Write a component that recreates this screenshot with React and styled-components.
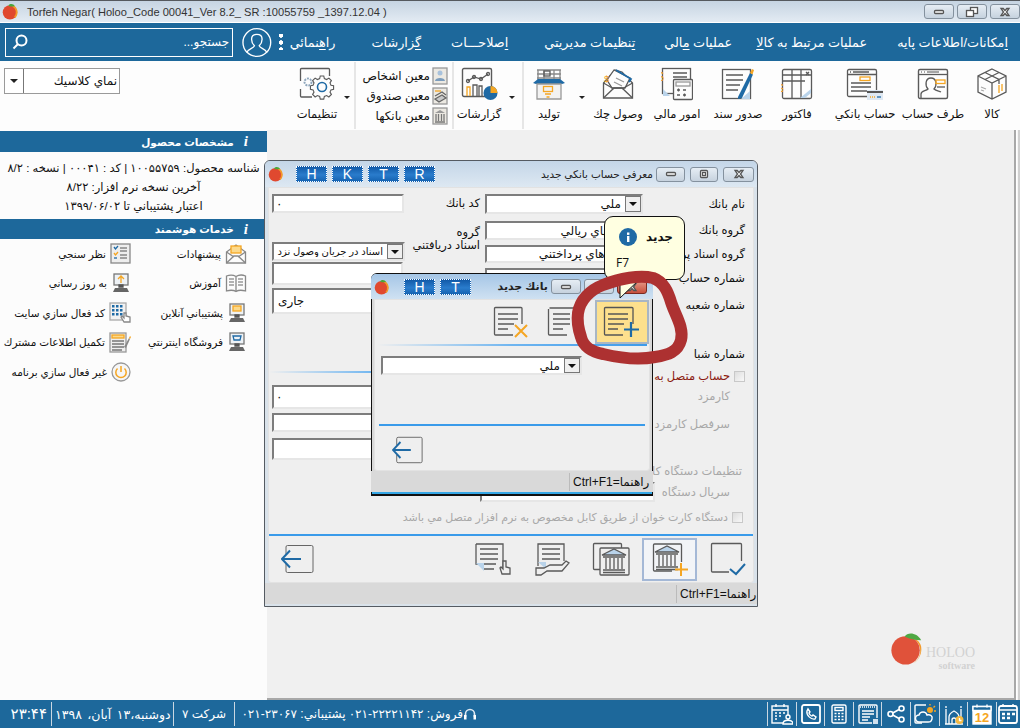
import React from 'react'
import styled, { createGlobalStyle } from 'styled-components'

const G = '#5a5a5a'
const O = '#f5a623'
const B = '#1f6aa5'
const L = '#b9d3ea'
const W = '#fff'

const GlobalStyle = createGlobalStyle`
  html, body { margin: 0; padding: 0; background: #f0f0f0; }
  * { box-sizing: border-box; }
  body { font-family: "Liberation Sans", "DejaVu Sans", sans-serif; font-size: 11px; color: #111; }
`

const Page = styled.div`
  width: 1020px;
  height: 728px;
  display: flex;
  flex-direction: column;
  overflow: hidden;
`

/* ---------- top of the app ---------- */
const TitleBar = styled.div`
  height: 23px;
  flex: none;
  display: flex;
  align-items: center;
  padding: 0 0 0 2px;
  border-top: 1px solid #55595e;
  border-bottom: 1px solid #fff;
  background: linear-gradient(#c6d4e2, #e3ebf3);
`
const AppTitle = styled.span`
  margin-left: 8px;
  font-size: 11.1px;
  color: #333;
  flex: 1;
`
const Controls = styled.div`
  display: flex;
  gap: ${(p) => p.$gap || 3}px;
`
const Ctl = styled.div`
  width: ${(p) => p.$w}px;
  height: 15px;
  display: flex;
  align-items: center;
  justify-content: center;
  border: 1px solid ${(p) => (p.$red ? '#7a2a20' : '#84919e')};
  border-radius: 3px;
  background: ${(p) => (p.$red ? 'linear-gradient(#e8a090, #c8503c)' : 'linear-gradient(#e6edf4, #c6d2de)')};
`
const MenuBar = styled.div`
  height: 38px;
  flex: none;
  display: flex;
  direction: rtl;
  align-items: center;
  padding: 0 12px 0 5px;
  color: #fff;
  background: #1d689b;
  font-size: 12.8px;
`
const MenuItem = styled.span`
  margin-left: ${(p) => p.$gap}px;
  white-space: nowrap;
  u { text-underline-offset: 2px; }
`
const Dots = styled.span`
  width: 4px;
  height: 16px;
  margin: 0 7px 0 7px;
  background: radial-gradient(circle, #fff 2px, transparent 2.4px) 0 -2px / 4px 7px repeat-y;
`
const SearchBox = styled.div`
  width: 238px;
  height: 29px;
  margin-right: 9px;
  display: flex;
  align-items: center;
  justify-content: space-between;
  padding: 0 3px 0 6px;
  border: 1px solid #fff;
  font-size: 12px;
`

const Toolbar = styled.div`
  height: 69px;
  flex: none;
  display: flex;
  direction: rtl;
  background: #fdfdfd;
  padding-top: 1px;
`
const Tool = styled.div`
  width: ${(p) => p.$w}px;
  flex: none;
  display: flex;
  flex-direction: column;
  align-items: center;
  white-space: nowrap;
  font-size: 11.5px;
  svg { height: 34px; margin-top: 5px; flex: none; }
  span { margin-top: 6px; }
`
const ToolArrow = styled.div`
  width: ${(p) => p.$w}px;
  flex: none;
  padding-top: 34px;
  display: flex;
  justify-content: center;
  &::after {
    content: '';
    border: 3px solid transparent;
    border-top: 3px solid #222;
    border-bottom: 0;
  }
`
const ToolSep = styled.div`
  width: 2px;
  flex: none;
  margin: 0 ${(p) => p.$m || 0}px 1px;
  background: #e6e6e6;
`
const Ledgers = styled.div`
  width: 96px;
  flex: none;
  display: flex;
  flex-direction: column;
  padding: 4px 4px 0 0;
`
const LedgerRow = styled.div`
  height: 20px;
  display: flex;
  align-items: center;
  gap: 2px;
  white-space: nowrap;
  font-size: 12px;
`
const ViewCombo = styled.div`
  width: 116px;
  height: 26px;
  margin: 6px auto 0 4px;
  display: flex;
  direction: ltr;
  border: 1px solid #9a9a9a;
  background: #fff;
  font-size: 12px;
`
const ComboArrow = styled.div`
  width: 19px;
  display: flex;
  align-items: center;
  justify-content: center;
  border-right: 1px solid #777;
  &::after {
    content: '';
    border: 4px solid transparent;
    border-top: 4px solid #222;
    border-bottom: 0;
  }
`
const ComboText = styled.div`
  flex: 1;
  direction: rtl;
  padding-right: 2px;
  line-height: 24px;
`

/* ---------- body ---------- */
const Body = styled.div`
  position: relative;
  flex: 1;
  display: flex;
  min-height: 0;
`
const Sidebar = styled.div`
  width: 267px;
  flex: none;
  direction: rtl;
  padding-top: 1px;
  background: #fcfcfc;
`
const SideHead = styled.div`
  height: ${(p) => p.$h || 21}px;
  display: flex;
  align-items: center;
  gap: 10px;
  padding-right: 19px;
  color: #fff;
  background: #1d689b;
  font-size: 10.5px;
  font-weight: bold;
  i { font-family: "Liberation Serif", serif; font-size: 15px; }
`
const SideInfo = styled.div`
  padding: 7px 0 3px;
  text-align: center;
  line-height: 19px;
  font-size: 11.5px;
  white-space: nowrap;
`
const SideGrid = styled.div`
  display: grid;
  grid-template-columns: 135px 132px;
  direction: ltr;
`
const SideItem = styled.div`
  height: 29.5px;
  display: flex;
  direction: rtl;
  align-items: center;
  gap: 4px;
  padding-right: ${(p) => p.$pr}px;
  white-space: nowrap;
  font-size: 10.5px;
`
const Desktop = styled.div`
  flex: 1;
  position: relative;
  margin-right: 4px;
  border-right: 2px solid #a8a8a8;
  border-bottom: 2px solid #a8a8a8;
  background: #f0f0f0;
`
const EdgeStrip = styled.div`
  position: absolute;
  top: 0;
  right: 0;
  bottom: 0;
  width: 4px;
  border-left: 1px solid #fff;
  border-right: 2px solid #d0d0d0;
  background: #f6f6f6;
`
const Brand = styled.div`
  position: absolute;
  right: 39px;
  bottom: 27px;
  display: flex;
  align-items: flex-start;
`
const BrandText = styled.div`
  margin: 13px 0 0 3px;
  font-family: "Liberation Serif", serif;
  color: #d2d2d2;
  text-align: right;
  font-size: 14px;
  line-height: 15px;
  small { display: block; font-size: 10px; line-height: 10px; margin-top: 1px; font-weight: bold; }
`

/* ---------- windows ---------- */
const Win = styled.div`
  position: absolute;
  left: ${(p) => p.$x}px;
  top: ${(p) => p.$y}px;
  width: ${(p) => p.$w}px;
  height: ${(p) => p.$h}px;
  display: flex;
  flex-direction: column;
  padding: 0 ${(p) => (p.$active ? 2 : 3)}px 2px;
  border: ${(p) => (p.$active ? '1.5px solid #111' : '1.5px solid #555b62')};
  border-radius: 6px 6px 0 0;
  background: ${(p) => (p.$active ? '#d8d8d8' : '#d9e2ea')};
  ${(p) => p.$active && 'border-bottom: 2px solid #111; box-shadow: inset 0 -2px 0 #35a7e6;'}
`
const WinTitle = styled.div`
  height: ${(p) => p.$h}px;
  flex: none;
  margin: 0 -3px;
  padding: 0 ${(p) => p.$pr}px 0 3px;
  display: flex;
  align-items: center;
  border-radius: 5px 5px 0 0;
  background: ${(p) => (p.$active ? 'linear-gradient(#a5c6e6, #cfe1f2)' : 'linear-gradient(#c4d6e8, #dde8f2)')};
`
const WinName = styled.div`
  margin-left: auto;
  margin-right: 3px;
  direction: rtl;
  font-size: ${(p) => p.$size || 11}px;
  font-weight: ${(p) => p.$weight || 'bold'};
  white-space: nowrap;
  color: #222;
`
const Letters = styled.div`
  display: flex;
  gap: 5px;
  margin-left: ${(p) => p.$ml || 12}px;
`
const Letter = styled.div`
  width: 31px;
  height: 16px;
  display: flex;
  align-items: center;
  justify-content: center;
  outline: 1px dotted #fff;
  outline-offset: -1px;
  color: #fff;
  font-size: 14px;
  background: linear-gradient(#0f56a4, #2a7ccc 55%, #1360ae);
`
const Panel = styled.div`
  flex: 1;
  min-height: 0;
  display: flex;
  flex-direction: column;
  background: #efefef;
  border: 1px solid #e2e2e2;
  border-radius: 0 0 3px 3px;
`
const WinStatus = styled.div`
  height: 21px;
  flex: none;
  margin: 0 -3px;
  display: flex;
  justify-content: flex-end;
  align-items: center;
  background: #d9d9d9;
  font-size: 12px;
`
const StatusCell = styled.div`
  width: ${(p) => p.$w}px;
  padding-left: 3px;
  line-height: 18px;
  border-left: 1px solid #bbb;
  white-space: nowrap;
`

const Form = styled.div`
  flex: 1;
  min-height: 0;
  display: flex;
  direction: ltr;
  padding: 6px 8px 0 3px;
`
const Col = styled.div`
  width: ${(p) => p.$w}px;
  flex: none;
  margin-left: ${(p) => p.$ml || 0}px;
  display: flex;
  flex-direction: column;
  direction: rtl;
`
const Row = styled.div`
  height: ${(p) => p.$h}px;
  flex: none;
  margin-top: ${(p) => p.$t || 0}px;
  display: flex;
  align-items: ${(p) => p.$align || 'center'};
  justify-content: ${(p) => p.$justify || 'space-between'};
  white-space: nowrap;
  font-size: 11.5px;
  color: ${(p) => p.$color || '#111'};
`
const FieldLabel = styled.div`
  width: ${(p) => (p.$w ? `${p.$w}px` : 'auto')};
  flex: none;
  padding-right: ${(p) => p.$pr || 0}px;
  line-height: 13px;
`
const Field = styled.div`
  width: ${(p) => p.$w}px;
  height: ${(p) => (p.$height ? `${p.$height}px` : '100%')};
  flex: none;
  margin: ${(p) => p.$m || 0};
  display: flex;
  align-items: center;
  padding: 0 ${(p) => p.$pad ?? 4}px;
  overflow: hidden;
  border: 2px solid;
  border-color: #7d7d7d #e6e6e6 #e6e6e6 #7d7d7d;
  background: #fff;
  font-size: 12px;
  direction: ${(p) => (p.$ltr ? 'ltr' : 'rtl')};
`
const FieldValue = styled.span`
  flex: 1;
  direction: rtl;
  text-align: right;
  white-space: nowrap;
  overflow: hidden;
  font-size: ${(p) => p.$size || 12}px;
`
const DropBtn = styled.div`
  width: 16px;
  height: 100%;
  flex: none;
  margin-left: 4px;
  display: flex;
  align-items: center;
  justify-content: center;
  border: 1px solid #777;
  background: #efefef;
  &::after {
    content: '';
    border: 4px solid transparent;
    border-top: 4px solid #111;
    border-bottom: 0;
  }
`
const FadeRule = styled.div`
  height: 2px;
  flex: none;
  margin: ${(p) => p.$m || '0'};
  background: linear-gradient(to right, #efefef, #6fb5f0 50%, #3c9bea);
`
const BlueRule = styled.div`
  height: 2px;
  flex: none;
  margin: ${(p) => p.$m || '0'};
  background: #3a9bea;
`
const CheckBox = styled.span`
  width: 11px;
  height: 11px;
  flex: none;
  display: inline-block;
  border: 1px solid #c8c8c8;
  background: linear-gradient(135deg, #ddd, #f8f8f8);
`
const CheckLine = styled.div`
  display: flex;
  align-items: center;
  gap: 4px;
  direction: rtl;
  margin: ${(p) => p.$m || 0};
  padding-right: ${(p) => p.$pr || 0}px;
  height: 14px;
  white-space: nowrap;
  font-size: ${(p) => p.$size || 11.5}px;
  color: ${(p) => p.$color};
`
const SmallKey = styled.div`
  width: 30px;
  height: 20px;
  margin: 0 17px 0 0;
  background: #b5b5b5;
  border-radius: 0 0 2px 2px;
`
const Actions = styled.div`
  height: 46px;
  flex: none;
  display: flex;
  align-items: center;
  direction: ltr;
  padding: 0 8px 0 12px;
`
const ActionBtn = styled.div`
  width: ${(p) => p.$w}px;
  height: ${(p) => p.$h || 43}px;
  flex: none;
  margin: ${(p) => p.$m || 0};
  display: flex;
  align-items: center;
  justify-content: center;
  border: ${(p) => (p.$on ? '2px solid #a4b8d6' : '0')};
  background: ${(p) => (p.$on ? '#f2f4f7' : 'transparent')};
`
const BankToolbar = styled.div`
  height: 44px;
  flex: none;
  display: flex;
  align-items: center;
  direction: ltr;
  padding: 0 0 0 118px;
`
const ToolGap = styled.span`
  width: ${(p) => p.$w}px;
  flex: none;
`
const NewDocBtn = styled.div`
  width: 54px;
  height: 44px;
  margin-left: 12px;
  display: flex;
  align-items: center;
  justify-content: center;
  border: 2px solid #a9b6c4;
  background: #fde08d;
`
const BankSelect = styled.div`
  margin: 10px 0 0 6px;
  height: 19px;
  flex: none;
`
const Tip = styled.div`
  position: absolute;
  left: 604px;
  top: 86px;
  width: 81px;
  height: 64px;
  padding: 11px 11px 0 11px;
  border: 1px solid #111;
  border-radius: 9px;
  background: #ffffe1;
  font-size: 12px;
`
const TipHead = styled.div`
  display: flex;
  align-items: center;
  justify-content: space-between;
  padding-left: 3px;
  font-weight: bold;
  direction: ltr;
`
const TipKey = styled.div`
  margin-top: 8px;
  font-family: "Open Sans", sans-serif;
`
const Overlay = styled.svg`
  position: absolute;
  left: ${(p) => p.$x}px;
  top: ${(p) => p.$y}px;
  overflow: visible;
  pointer-events: none;
`

/* ---------- bottom bar ---------- */
const BottomBar = styled.div`
  height: 28px;
  flex: none;
  display: flex;
  align-items: center;
  padding-left: 11px;
  color: #fff;
  background: #1d689b;
`
const BottomText = styled.span`
  direction: rtl;
  width: ${(p) => p.$w}px;
  flex: none;
  text-align: ${(p) => p.$align || 'center'};
  white-space: nowrap;
  font-size: ${(p) => p.$size || 12}px;
  word-spacing: ${(p) => p.$ws || 0}px;
`
const Phone = styled.bdi`
  direction: ltr;
  unicode-bidi: isolate;
`
const BarSep = styled.div`
  width: 1px;
  height: 24px;
  flex: none;
  margin: 0 ${(p) => p.$r ?? 0}px 0 ${(p) => p.$l ?? 0}px;
  background: #c9d7e2;
`
const TrayIcons = styled.div`
  display: flex;
  align-items: center;
  margin-left: auto;
  overflow: hidden;
  width: 253px;
`
const TrayCell = styled.div`
  width: ${(p) => p.$w}px;
  flex: none;
  display: flex;
  justify-content: center;
`

/* ---------- drawings ---------- */
const Svg = ({ w, h = w, stroke = G, sw = 1.3, children }) => (
  <svg width={w} height={h} viewBox={`0 0 ${w} ${h}`} fill="none" stroke={stroke} strokeWidth={sw}>
    {children}
  </svg>
)

const Tomato = ({ s = 16 }) => (
  <svg width={s} height={s} viewBox="0 0 16 16">
    <circle cx="7.5" cy="8.8" r="6.8" fill="#e0492f" />
    <path d="M10 2.5a7 7 0 0 1 2 11" stroke="#f39a2a" strokeWidth="1.6" fill="none" />
    <path d="M6 2.5C8 0 11 1 12 3 9.5 3.5 8 3.5 6 2.5Z" fill="#4aa63a" />
  </svg>
)
const MinIcon = () => (
  <Svg w={12} h={8} stroke="#555"><rect x="1.5" y="2.5" width="9" height="3" rx="1" fill="#fff" /></Svg>
)
const MaxIcon = () => (
  <Svg w={12} h={10} stroke="#555"><rect x="2.5" y="1.5" width="7" height="7" rx="1" fill="#fff" /><rect x="4.5" y="3.5" width="3" height="3" /></Svg>
)
const RestoreIcon = () => (
  <Svg w={14} h={12} stroke="#555"><rect x="5.5" y="1.5" width="7" height="6" fill="#fff" /><rect x="1.5" y="4.5" width="7" height="6" fill="#fff" /></Svg>
)
const CloseIcon = () => (
  <Svg w={14} h={10} stroke="#555"><path d="M3 1.5h2.2L7 3.5l1.8-2H11L8.5 5 11 8.5H8.8L7 6.5l-1.8 2H3L5.5 5Z" fill="#fff" /></Svg>
)

const BoxIcon = () => (
  <Svg w={32} h={34}>
    <path d="M16 2 30 9V25L16 32 2 25V9Z M2 9 16 16 30 9 M16 16V32 M9 5.5 23 12.5V17 M23 5.5 9 12.5" />
    <path d="M23 18v8M26 17v7" stroke={O} />
    <path d="M5 20l5 2M5 23l3 1" stroke="#aaa" />
  </Svg>
)
const ContactIcon = () => (
  <Svg w={32} h={34}>
    <rect x="1.5" y="2.5" width="29" height="29" rx="1.5" strokeWidth="1.4" />
    <path d="M2 7.5h28" />
    <path d="M4 5h1M7 5h1M10 5h12" stroke="#888" />
    <path d="M4 31v-4c0-3 5-3 7-5-3-3-3-11 3-11s6 8 3 11c2 2 5 2 7 3" />
    <rect x="19" y="13" width="9" height="3.5" stroke={O} />
    <path d="M20 20h8" />
  </Svg>
)
const BankAccIcon = () => (
  <Svg w={38} h={34}>
    <rect x="1.5" y="2.5" width="29" height="27" rx="1.5" />
    <path d="M2 7.5h28M4 5h1M7 5h16" />
    <rect x="14" y="10" width="10" height="3.5" stroke={O} />
    <path d="M5 16h20M5 20h20M5 24h16" />
    <rect x="21" y="23" width="16" height="10" fill="#dfe9f3" stroke="none" />
    <rect x="21" y="24" width="16" height="2" fill="#555" stroke="none" />
    <path d="M24 30h5" stroke={O} strokeDasharray="1 1" /><path d="M31 30h4" stroke={B} />
  </Svg>
)
const InvoiceIcon = () => (
  <Svg w={32} h={34}>
    <rect x="1.5" y="2.5" width="29" height="29" rx="1.5" />
    <path d="M2 8h28M2 14h22M11 3v28M20 3v28" />
    <path d="M25 5l3 3m0-3l-3 3" />
    <path d="M30 22v4l-6 5h-5Z" fill={L} stroke="none" />
    <text x="2.5" y="25" fontSize="11" fill={O} stroke="none">$</text>
  </Svg>
)
const VoucherIcon = () => (
  <Svg w={34} h={34}>
    <rect x="1.5" y="2.5" width="28" height="29" />
    <path d="M5 8h17M5 13h17M5 18h14M5 23h12" strokeWidth="1.5" />
    <path d="M17 30 29 6l3 1.5L21 31l-4 1Z" fill={B} stroke="none" />
    <path d="M29 6l2-4 2 1-1.5 4.5Z" fill={O} stroke="none" />
    <path d="M20 32h9v-8Z" fill={L} stroke="none" />
  </Svg>
)
const FinanceIcon = () => (
  <Svg w={32} h={34}>
    <rect x="1.5" y="1.5" width="28" height="25" />
    <path d="M12 6h14M12 10h14" />
    <text x="3" y="14" fontSize="13" fill={O} stroke="none">$</text>
    <path d="M2 22v7h7Z" fill={L} stroke="none" />
    <rect x="12.5" y="12.5" width="19" height="20" rx="1" fill="#fdfdfd" />
    <rect x="15" y="15" width="14" height="4" stroke="#999" />
    <path d="M16 23h3M22 23h3M16 28h3M22 28h3M17.5 21.5v3M23.5 26.5v3" />
  </Svg>
)
const EnvelopeCheckIcon = () => (
  <Svg w={32} h={34}>
    <path d="M1.5 16v15h29V16L20 5 13 3Z" />
    <path d="M5 13 12 3l16 8-5 10H10Z" fill="#fdfdfd" />
    <path d="M14 3l15 9-2 3" stroke={B} strokeWidth="1.8" />
    <text x="7" y="15" fontSize="9" fill={O} stroke="none">$</text>
    <path d="M14 11l8 4M12 15l8 4" stroke="#999" />
    <path d="M1.5 31 12 21h8L30.5 31M1.5 16 12 22M30.5 16 20 22" />
  </Svg>
)
const ProductionIcon = () => (
  <Svg w={34} h={34}>
    <path d="M5 3h24M5 7h24M5 11h24M6 3v10M12 3v10M22 3v10M28 3v10" stroke="#888" />
    <rect x="12" y="4" width="6" height="5" />
    <path d="M1 16 6 12h22l5 4-3 1H4Z" fill={B} stroke="none" />
    <path d="M5 17h24v15H5Z" fill="#f2f2f2" stroke="#999" />
    <rect x="11.5" y="19.5" width="9" height="5" stroke={O} />
    <path d="M13 27h6M14.5 30h3" stroke={O} strokeWidth="1.6" />
  </Svg>
)
const ReportIcon = () => (
  <Svg w={37} h={34}>
    <rect x="1.5" y="1.5" width="29" height="28" rx="1.5" strokeWidth="1.4" />
    <path d="M7 14l6-4 7 2 7-5" />
    <circle cx="7" cy="14" r="1.5" /><circle cx="13" cy="10" r="1.5" /><circle cx="20" cy="12" r="1.5" /><circle cx="27" cy="7" r="1.5" />
    <path d="M6 29V20h3v9" stroke={O} /><path d="M12 29V18h4v11M18 29V19h3v10" />
    <circle cx="29.5" cy="26" r="7" fill={B} stroke="none" />
    <path d="M29.5 26v-7a7 7 0 0 1 7 7Z" fill={O} stroke="none" />
  </Svg>
)
const GearIcon = () => (
  <Svg w={36} h={34}>
    <path d="M1.5 14V2.5a1 1 0 0 1 1-1h27a1 1 0 0 1 1 1V9M1.5 22v7a1 1 0 0 0 1 1H13" />
    <circle cx="23" cy="20" r="4.5" stroke={B} strokeWidth="1.6" />
    <path d="M21 8h4l.7 3 2.6 1.1 2.6-1.6 2.9 2.9-1.6 2.6 1.1 2.6 3 .7v4l-3 .7-1.1 2.6 1.6 2.6-2.9 2.9-2.6-1.6-2.6 1.1-.7 3h-4l-.7-3-2.6-1.1-2.6 1.6-2.9-2.9 1.6-2.6-1.1-2.6-3-.7v-4l3-.7 1.1-2.6-1.6-2.6 2.9-2.9 2.6 1.6 2.6-1.1Z" transform="translate(3 2) scale(.87)" />
    <circle cx="9" cy="15" r="3.5" stroke="#8fa7bd" strokeDasharray="2 1" strokeWidth="2" />
  </Svg>
)
const TOOL_ICONS = { BoxIcon, ContactIcon, BankAccIcon, InvoiceIcon, VoucherIcon, FinanceIcon, EnvelopeCheckIcon, ProductionIcon, ReportIcon }

const PersonLedger = () => (
  <Svg w={16} h={18} stroke="#999">
    <rect x="1" y="1" width="14" height="16" fill="#ece9e2" />
    <circle cx="8" cy="6" r="2.5" fill="#a8c2dc" stroke="none" />
    <path d="M3 14c0-4 10-4 10 0Z" fill="#7b9cbc" stroke="none" />
  </Svg>
)
const CashLedger = () => (
  <Svg w={16} h={18} stroke="#999">
    <rect x="1" y="1" width="14" height="16" fill="#ece9e2" />
    <path d="M3 4h6" stroke={O} />
    <path d="M3 12l7-4 4 3-7 4Z" fill="#c9c9c9" stroke="#666" />
    <path d="M3 9l7-4 4 3" stroke="#666" />
  </Svg>
)
const BankLedger = () => (
  <Svg w={16} h={18} stroke="#999">
    <rect x="1" y="1" width="14" height="16" fill="#ece9e2" />
    <path d="M3 6l5-3 5 3Z" fill="#999" stroke="none" />
    <path d="M4 7v7M6.5 7v7M9.5 7v7M12 7v7M3 15h10" stroke="#777" />
  </Svg>
)

const MailIdea = () => (
  <Svg w={22} h={22} stroke="#888">
    <path d="M1.5 9v11h19V9L11 2Z" />
    <rect x="6" y="3" width="10" height="7" fill="#fcd98a" stroke={O} />
    <path d="M1.5 20 9 13h4l7.5 7M1.5 9 9 14M20.5 9 13 14" />
  </Svg>
)
const ChecklistIcon = () => (
  <Svg w={21} h={21} stroke="#888">
    <rect x="1" y="1" width="19" height="19" fill="#eee" />
    <path d="M4 4l1.5 2L8 3" stroke={B} />
    <path d="M4 10l1.5 2L8 9" stroke={O} />
    <path d="M4 15h3" stroke={B} />
    <path d="M10 5h7M10 8h7M10 12h7M10 15h7" />
  </Svg>
)
const BookIcon = () => (
  <Svg w={22} h={21} stroke="#888">
    <path d="M1.5 3c4-1.5 7-1 9.5.5C13.5 2 17 1.5 20.5 3v15c-3.5-1-7-1-9.5.5C8.5 17 5 17 1.5 18ZM11 3.5v15" />
    <path d="M4 6h5M4 9h5M4 12h5M13 6h5M13 9h5M13 12h5" stroke="#999" />
  </Svg>
)
const Monitor = ({ children }) => (
  <Svg w={20} h={20} stroke="#555">
    <rect x="3" y="1" width="14" height="11" fill="#eef2f6" stroke="#777" />
    <path d="M8 12h4v2H8Z" fill="#555" />
    <path d="M2 19l2-4h12l2 4Z" fill="#666" stroke="none" />
    {children}
  </Svg>
)
const KeypadIcon = () => (
  <Svg w={22} h={21} stroke="#aaa">
    <rect x="1" y="1" width="16" height="17" fill="#f2f2f2" />
    {[3, 7, 11].flatMap((x) => [3, 7, 11].map((y) => <rect key={`${x}${y}`} x={x} y={y} width="2.5" height="2.5" fill={B} stroke="none" />))}
    <path d="M15 20l-3-5 1-1 2 2v-5h2v3l4 1v5Z" fill="#fff" stroke="#888" />
  </Svg>
)
const FormPenIcon = () => (
  <Svg w={22} h={21} stroke="#999">
    <rect x="1" y="1" width="16" height="19" fill="#eee" />
    <rect x="3" y="3" width="12" height="3" fill="#fcd98a" stroke={O} />
    <path d="M3 9h12M3 12h12M3 15h12M3 18h10" stroke="#777" />
    <path d="M15 15 20 6l1 1-4 9Z" fill="#888" stroke="none" />
    <path d="M20 6l1-2 1 1-1 2Z" fill={O} stroke="none" />
  </Svg>
)
const PowerIcon = () => (
  <Svg w={20} h={20} stroke="#999">
    <circle cx="10" cy="10" r="9" fill="#f6f6f6" />
    <path d="M6.5 6.5a5.2 5.2 0 1 0 7 0M10 4v6" stroke={O} strokeWidth="1.5" />
  </Svg>
)

const BlueArrow = () => (
  <svg width="34" height="30" viewBox="0 0 34 30" fill="none">
    <path d="M6.5 1.5h24a1.5 1.5 0 0 1 1.5 1.5v24a1.5 1.5 0 0 1-1.5 1.5h-24a1.5 1.5 0 0 1-1.5-1.5v-7M5 10V3a1.5 1.5 0 0 1 1.5-1.5" stroke="#666" strokeWidth="1" />
    <path d="M1 15h19M9 6.5 1 15l8 8.5" stroke="#1f6aa5" strokeWidth="2" />
  </svg>
)
const DocLines = () => (
  <Svg w={36} h={32}>
    <path d="M2.5 2h25a1 1 0 0 1 1 1v17M1.5 3v25a1 1 0 0 0 1 1H20" />
    <path d="M6 8h17M6 13h17M6 18h17M6 23h10" strokeWidth="1.4" />
  </Svg>
)
const OkBox = () => (
  <Svg w={38} h={34}>
    <path d="M20 30H3.5a1 1 0 0 1-1-1V2.5a1 1 0 0 1 1-1h28a1 1 0 0 1 1 1V19" />
    <path d="M21 27l6 5 9-10" stroke={B} strokeWidth="2" />
  </Svg>
)
const Temple = ({ x = 0, y = 0, c = G }) => (
  <g transform={`translate(${x} ${y})`}>
    <path d="M0 7 12 1l12 6Z" fill={L} stroke={c} />
    <path d="M1 9h22M1 22h22M1 24.5h22M4 10v11M8 10v11M12 10v11M16 10v11M20 10v11" stroke={c} />
  </g>
)
const AddBank = () => (
  <Svg w={38} h={34}>
    <path d="M2.5 3a1 1 0 0 1 1-1h26a1 1 0 0 1 1 1v17M2.5 3v25a1 1 0 0 0 1 1H21" />
    <Temple x={4} y={3} />
    <path d="M30 21v13M24 27.5h13" stroke={O} strokeWidth="2" />
  </Svg>
)
const TwoBanks = () => (
  <Svg w={38} h={34}>
    <rect x="1.5" y="1.5" width="28" height="26" rx="1" />
    <rect x="8" y="6" width="29" height="27" rx="1" fill="#efefef" />
    <Temple x={10} y={6} />
  </Svg>
)
const DocHand = () => (
  <Svg w={38} h={34}>
    <path d="M2 2h27v24" /><path d="M2 2v20h4" />
    <path d="M6 7h18M6 12h18M6 17h18M10 22h12M10 27h10" strokeWidth="1.4" />
    <path d="M2 21l8 8V21Z" fill={L} stroke="none" />
    <path d="M28 32l-2-6 1-1 2 2v-8h3v6l4 1v6Z" fill="#efefef" />
  </Svg>
)
const DocShare = () => (
  <Svg w={38} h={34}>
    <path d="M5 24V2h26v17" />
    <path d="M9 7h18M9 12h18M9 17h18" strokeWidth="1.4" />
    <path d="M5 20h8v7Z" fill={L} stroke="none" />
    <path d="M3 33v-7h8l6-3h12l4-4 3 2-7 8H14l-6 4Z" fill="#efefef" />
  </Svg>
)
const NewDoc = () => (
  <Svg w={38} h={32} stroke="#555">
    <path d="M20 29H2.5a1 1 0 0 1-1-1V2.5a1 1 0 0 1 1-1H29a1 1 0 0 1 1 1V18" />
    <path d="M5 8h20M5 13h20M5 18h16M5 23h10" strokeWidth="1.5" />
    <path d="M28 16v15M21 23.5h15" stroke={B} strokeWidth="2.2" />
  </Svg>
)
const DelDoc = () => (
  <Svg w={36} h={32}>
    <path d="M20 29H2.5a1 1 0 0 1-1-1V2.5a1 1 0 0 1 1-1H28a1 1 0 0 1 1 1V18" />
    <path d="M5 8h20M5 13h20M5 18h16M5 23h10" strokeWidth="1.5" />
    <path d="M22 19l12 12M34 19 22 31" stroke={O} strokeWidth="2" />
  </Svg>
)
const Headset = () => (
  <Svg w={14} h={14} stroke="#dfe9f2" sw="1.6"><path d="M2.5 10V7a4.5 4.5 0 0 1 9 0v3" /><rect x="1" y="8" width="2.5" height="4.5" fill="#fff" stroke="none" /><rect x="10.5" y="8" width="2.5" height="4.5" fill="#fff" stroke="none" /></Svg>
)

const TrayA = () => (
  <Svg w={22} h={22} stroke={W} sw="1.4">
    <rect x="1" y="3" width="16" height="17" /><path d="M1 7h16M5 1v3M13 1v3" />
    <path d="M4 10h2M8 10h2M12 10h2M4 13h2M8 13h2M4 16h2" strokeWidth="1.6" />
    <circle cx="17" cy="14" r="2" fill="#1d689b" /><path d="M12 21c0-5 10-5 10 0Z" fill="#1d689b" />
  </Svg>
)
const TrayB = () => (
  <Svg w={20} h={20} stroke={W} sw="1.4">
    <rect x="1" y="1" width="18" height="18" rx="2" strokeWidth="1.8" />
    <path d="M7 5l2 3-1 1c0 1 2 3 3 3l1-1 3 2-1 2c-4 1-9-4-8-8Z" />
  </Svg>
)
const TrayC = () => (
  <Svg w={16} h={20} stroke={W} sw="1.4">
    <rect x="1" y="1" width="14" height="18" rx="1.5" /><rect x="4" y="3.5" width="8" height="3" />
    <path d="M3.5 9.5h2M7 9.5h2M10.5 9.5h2M3.5 12.5h2M7 12.5h2M10.5 12.5h2M3.5 15.5h2M7 15.5h2M10.5 15.5h2" strokeWidth="1.7" />
  </Svg>
)
const TrayD = () => (
  <Svg w={20} h={20} stroke={W} sw="1.4">
    <path d="M14 19H2a1 1 0 0 1-1-1V2a1 1 0 0 1 1-1h16a1 1 0 0 1 1 1v12" />
    <path d="M2 3h16" strokeDasharray="1 1" /><path d="M4 7h12M4 10h12M4 13h8M4 16h6" />
    <rect x="15" y="15" width="5" height="5" fill="#cfe0ee" stroke="none" />
  </Svg>
)
const TrayE = () => (
  <Svg w={18} h={18} stroke={W} sw="1.6">
    <circle cx="3.5" cy="9" r="2.5" /><circle cx="14.5" cy="3.5" r="2.5" /><circle cx="14.5" cy="14.5" r="2.5" />
    <path d="M5.8 8 12 4.5M5.8 10 12 13.5" />
  </Svg>
)
const TrayF = () => (
  <Svg w={22} h={20} stroke={W} sw="1.4">
    <path d="M12 1H2a1 1 0 0 0-1 1v16a1 1 0 0 0 1 1h6" /><path d="M6 18h-1a3.5 3.5 0 0 1 0-7c1-4 7-4 8 0 3-1 6 1 5 4s-2 3-4 3Z" />
    <circle cx="16" cy="6" r="3" fill={O} stroke="none" /><path d="M16 0v1.5M21 2l-1.5 1.5M22 7h-2" stroke={O} />
  </Svg>
)
const TrayG = () => (
  <Svg w={20} h={22} stroke={W} sw="1.3">
    <path d="M2 21V6M2 3v2M17 21V6M17 3v2M5 21v-7c0-3 3-5 5-6 2 1 5 3 5 6v7M1 21h18M8 21v-4a2 2 0 0 1 4 0v4" />
    <circle cx="15.5" cy="17" r="4" fill="#f4b942" stroke="none" /><path d="M15.5 15v2.5h2" stroke="#fff" />
  </Svg>
)
const TrayH = () => (
  <svg width="20" height="21" viewBox="0 0 20 21" fill="none" stroke="#fff" strokeWidth="1.4">
    <rect x="1" y="2.5" width="18" height="17.5" fill="#fff" /><path d="M1 2.5h18v4H1Z" fill="#1d689b" /><path d="M5 .5v3M15 .5v3" />
    <text x="10" y="18" textAnchor="middle" fontSize="13" fontWeight="bold" fill="#f5a623" stroke="none" fontFamily="Liberation Sans">12</text>
  </svg>
)
const TrayI = () => (
  <Svg w={20} h={20} stroke={W} sw="1.4">
    <rect x="1" y="2" width="18" height="17" rx="2" strokeWidth="1.8" />
    <path d="M1 6h18M5 0v3M15 0v3" />
    <path d="M4 10h3M9 10h3M14 10h3M4 14h3M9 14h3" strokeWidth="2.4" />
  </Svg>
)

const tools = [
  { w: 56, icon: 'BoxIcon', label: 'کالا' },
  { w: 62, icon: 'ContactIcon', label: 'طرف حساب' },
  { w: 74, icon: 'BankAccIcon', label: 'حساب بانکي' },
  { w: 62, icon: 'InvoiceIcon', label: 'فاکتور' },
  { w: 56, icon: 'VoucherIcon', label: 'صدور سند' },
  { w: 66, icon: 'FinanceIcon', label: 'امور مالي' },
  { w: 52, icon: 'EnvelopeCheckIcon', label: 'وصول چك' },
  { arrow: 20 },
  { w: 46, icon: 'ProductionIcon', label: 'تولید' },
]

const sideItems = [
  [<MailIdea key="a" />, 'پیشنهادات', <ChecklistIcon key="b" />, 'نظر سنجي'],
  [<BookIcon key="a" />, 'آموزش', <Monitor key="b"><path d="M10 10V4M7 6l3-3 3 3" stroke={O} /></Monitor>, 'به روز رساني'],
  [<Monitor key="a"><rect x="6" y="3" width="8" height="5" fill="#fcd98a" stroke={O} /></Monitor>, 'پشتيباني آنلاین', <KeypadIcon key="b" />, 'کد فعال سازي سایت'],
  [<Monitor key="a"><path d="M6 4h8l-1 4H7Z" stroke={B} /></Monitor>, 'فروشگاه اینترنتي', <FormPenIcon key="b" />, 'تکمیل اطلاعات مشترك'],
]

const tray = [
  [28, TrayA], [27, TrayB], [28, TrayC], [27, TrayD], [28, TrayE], [28, TrayF], [27, TrayG], [28, TrayH], [22, TrayI],
]

export default function App() {
  return (
    <>
      <GlobalStyle />
      <Page>
        <TitleBar>
          <Tomato s={17} />
          <AppTitle>Torfeh Negar( Holoo_Code 00041_Ver 8.2_ SR :10055759 _1397.12.04 )</AppTitle>
          <Controls>
            <Ctl $w={30}><MinIcon /></Ctl>
            <Ctl $w={30}><RestoreIcon /></Ctl>
            <Ctl $w={30}><CloseIcon /></Ctl>
          </Controls>
        </TitleBar>

        <MenuBar>
          <MenuItem $gap={30}><u>ا</u>مکانات/اطلاعات پایه</MenuItem>
          <MenuItem $gap={24}>عملیات مرتبط به کا<u>لا</u></MenuItem>
          <MenuItem $gap={29}>عملیات <u>م</u>الي</MenuItem>
          <MenuItem $gap={36}><u>ت</u>نظیمات مدیریتي</MenuItem>
          <MenuItem $gap={30}><u>ا</u>صلاحـــات</MenuItem>
          <MenuItem $gap={36}><u>گ</u>زارشات</MenuItem>
          <MenuItem $gap={0}>را<u>ه</u>نمائي</MenuItem>
          <Dots />
          <Svg w={31} h={31} stroke={W} sw="1.4">
            <circle cx="15.5" cy="15.5" r="14.5" />
            <path d="M5 26c1-4 7-4 8-7-2-2-3-5-3-7 0-3 2-5 5.5-5S21 9 21 12c0 2-1 5-3 7 1 3 7 3 8 7" />
          </Svg>
          <SearchBox>
            <span>جستجو...</span>
            <Svg w={16} h={16} stroke={W} sw="2"><circle cx="9.5" cy="6.5" r="5" /><path d="M6 10 1.5 14.5" /></Svg>
          </SearchBox>
        </MenuBar>

        <Toolbar>
          {tools.map((t, i) => {
            if (t.arrow) return <ToolArrow key={i} $w={t.arrow} />
            const Icon = TOOL_ICONS[t.icon]
            return (
              <Tool key={t.label} $w={t.w}>
                <Icon />
                <span>{t.label}</span>
              </Tool>
            )
          })}
          <ToolSep $m={2} />
          <ToolArrow $w={16} />
          <Tool $w={50}>
            <ReportIcon />
            <span>گزارشات</span>
          </Tool>
          <ToolSep />
          <Ledgers>
            <LedgerRow><PersonLedger />معین اشخاص</LedgerRow>
            <LedgerRow><CashLedger />معین صندوق</LedgerRow>
            <LedgerRow><BankLedger />معین بانکها</LedgerRow>
          </Ledgers>
          <ToolSep />
          <ToolArrow $w={15} />
          <Tool $w={44}>
            <GearIcon />
            <span>تنظیمات</span>
          </Tool>
          <ViewCombo>
            <ComboArrow />
            <ComboText>نماي کلاسیك</ComboText>
          </ViewCombo>
        </Toolbar>

        <Body>
          <Sidebar>
            <SideHead><i>i</i>مشخصات محصول</SideHead>
            <SideInfo>
              <div>شناسه محصول: ۱۰۰۵۵۷۵۹ | کد : ۰۰۰۴۱ | نسخه : ۸/۲</div>
              <div>آخرین نسخه نرم افزار: ۸/۲۲</div>
              <div>اعتبار پشتیباني تا ۱۳۹۹/۰۶/۰۲</div>
            </SideInfo>
            <SideHead $h={20}><i>i</i>خدمات هوشمند</SideHead>
            <SideGrid>
              {sideItems.map(([ia, ta, ib, tb]) => (
                <React.Fragment key={ta}>
                  <SideItem $pr={4}>{ib}{tb}</SideItem>
                  <SideItem $pr={20}>{ia}{ta}</SideItem>
                </React.Fragment>
              ))}
              <SideItem $pr={4}><PowerIcon />غیر فعال سازي برنامه</SideItem>
            </SideGrid>
          </Sidebar>
          <Desktop>
            <Brand>
              <svg width="33" height="33" viewBox="0 0 36 36">
                <path d="M20 5a16 16 0 0 1 6 29c6-4 9-11 8-18-1-5-6-10-14-11Z" fill="#f39a2a" />
                <circle cx="17" cy="20" r="15.5" fill="#e0523a" />
                <path d="M16 5C19 0 29 0 34 9 27 9 22 8 16 5Z" fill="#4fa843" />
              </svg>
              <BrandText>HOLOO<small>software</small></BrandText>
            </Brand>
          </Desktop>
          <EdgeStrip />

          {/* main window */}
          <Win $x={264} $y={30} $w={494} $h={447}>
            <WinTitle $h={26} $pr={3}>
              <Tomato />
              <Letters>
                <Letter>H</Letter><Letter>K</Letter><Letter>T</Letter><Letter>R</Letter>
              </Letters>
              <WinName $size={10.5} $weight="normal">معرفي حساب بانکي جدید</WinName>
              <Controls $gap={5}>
                <Ctl $w={29}><MinIcon /></Ctl>
                <Ctl $w={28}><MaxIcon /></Ctl>
                <Ctl $w={31}><CloseIcon /></Ctl>
              </Controls>
            </WinTitle>
            <Panel>
              <Form>
                <Col $w={208}>
                  <Row $h={19}>
                    <FieldLabel>کد بانك</FieldLabel>
                    <Field $w={132} $ltr $pad={2}>۰</Field>
                  </Row>
                  <Row $h={35} $t={13} $align="flex-start">
                    <FieldLabel>گروه<br />اسناد دریافتني</FieldLabel>
                    <Field $w={133} $height={19} $m="16px 0 0" $ltr $pad={0}>
                      <FieldValue $size={10}>اسناد در جریان وصول نزد</FieldValue>
                      <DropBtn />
                    </Field>
                  </Row>
                  <Row $h={23} $t={1}><span /><Field $w={131} /></Row>
                  <Row $h={26} $t={3}><span /><Field $w={200} $ltr>جاری</Field></Row>
                  <FadeRule $m="57px 0 0 -3px" />
                  <Row $h={24} $t={12}><span /><Field $w={200} $ltr $pad={2}>۰</Field></Row>
                  <Row $h={19} $t={4}><span /><Field $w={200} /></Row>
                  <Row $h={22} $t={6}><span /><Field $w={200} /></Row>
                </Col>
                <Col $w={261} $ml={4}>
                  <Row $h={20} $justify="flex-start">
                    <FieldLabel $w={102}>نام بانك</FieldLabel>
                    <Field $w={158} $ltr $pad={0}>
                      <FieldValue>ملي</FieldValue>
                      <DropBtn />
                    </Field>
                  </Row>
                  <Row $h={19} $t={7} $justify="flex-start">
                    <FieldLabel $w={105}>گروه بانك</FieldLabel>
                    <Field $w={155}>حسابهاي ریالي</Field>
                  </Row>
                  <Row $h={18} $t={5} $justify="flex-start">
                    <FieldLabel $w={105}>گروه اسناد پرداختني</FieldLabel>
                    <Field $w={155}>اسناد هاي پرداختني</Field>
                  </Row>
                  <Row $h={20} $t={5} $justify="flex-start">
                    <FieldLabel $w={105}>شماره حساب</FieldLabel>
                    <Field $w={155} />
                  </Row>
                  <Row $h={16} $t={9}><FieldLabel>شماره شعبه</FieldLabel></Row>
                  <Row $h={14} $t={34}><FieldLabel>شماره شبا</FieldLabel></Row>
                  <CheckLine $m="8px 0 0" $color="#8b1a10"><CheckBox />حساب متصل به کارتخوان</CheckLine>
                  <Row $h={14} $t={6} $color="#a8a8a8"><FieldLabel $pr={15}>کارمزد</FieldLabel></Row>
                  <Row $h={14} $t={14} $color="#a8a8a8"><FieldLabel $pr={15}>سرفصل کارمزد</FieldLabel></Row>
                  <Row $h={14} $t={33} $color="#a8a8a8"><FieldLabel $pr={3}>تنظیمات دستگاه کارتخوان</FieldLabel></Row>
                  <Row $h={20} $t={4} $color="#a8a8a8" $justify="flex-start">
                    <FieldLabel $w={90} $pr={15}>سریال دستگاه</FieldLabel>
                    <Field $w={175} />
                    <SmallKey />
                  </Row>
                </Col>
              </Form>
              <CheckLine $color="#a8a8a8" $pr={10} $m="0 0 10px" $size={11}>
                <CheckBox />دستگاه کارت خوان از طریق کابل مخصوص به نرم افزار متصل مي باشد
              </CheckLine>
              <BlueRule />
              <Actions>
                <ActionBtn $w={34}><BlueArrow /></ActionBtn>
                <ActionBtn $w={40} $m="0 0 0 158px"><DocHand /></ActionBtn>
                <ActionBtn $w={38} $m="0 0 0 20px"><DocShare /></ActionBtn>
                <ActionBtn $w={38} $m="0 0 0 21px"><TwoBanks /></ActionBtn>
                <ActionBtn $w={55} $m="0 0 0 12px" $on><AddBank /></ActionBtn>
                <ActionBtn $w={38} $m="0 0 0 12px"><OkBox /></ActionBtn>
              </Actions>
            </Panel>
            <WinStatus><StatusCell $w={81}>Ctrl+F1=راهنما</StatusCell></WinStatus>
          </Win>

          {/* bank dialog */}
          <Win $x={371} $y={143} $w={282} $h={223} $active>
            <WinTitle $h={25} $pr={6} $active>
              <Tomato />
              <Letters $ml={14}>
                <Letter>H</Letter><Letter>T</Letter>
              </Letters>
              <WinName>بانك جدید</WinName>
              <Controls $gap={3}>
                <Ctl $w={30}><MinIcon /></Ctl>
                <Ctl $w={30}><MaxIcon /></Ctl>
                <Ctl $w={30} $red><CloseIcon /></Ctl>
              </Controls>
            </WinTitle>
            <Panel>
              <BankToolbar>
                <DelDoc />
                <ToolGap $w={18} />
                <DocLines />
                <NewDocBtn><NewDoc /></NewDocBtn>
              </BankToolbar>
              <FadeRule $m="0 2px" />
              <BankSelect>
                <Field $w={201} $ltr $pad={0}>
                  <FieldValue>ملي</FieldValue>
                  <DropBtn />
                </Field>
              </BankSelect>
              <BlueRule $m="49px 4px 0" />
              <ActionBtn $w={32} $h={30} $m="9px 0 0 17px"><BlueArrow /></ActionBtn>
            </Panel>
            <WinStatus><StatusCell $w={84}>Ctrl+F1=راهنما</StatusCell></WinStatus>
          </Win>

          <Overlay $x={604} $y={148} width="40" height="22">
            <path d="M16 0V20L36 1" fill="#ffffe1" stroke="#111" />
            <path d="M17 0h18" stroke="#ffffe1" strokeWidth="3" />
          </Overlay>
          <Tip>
            <TipHead>
              <Svg w={18} h={18} stroke="none"><circle cx="9" cy="9" r="9" fill={B} /><rect x="8" y="8" width="2.4" height="6" fill="#fff" /><rect x="8" y="4.5" width="2.4" height="2.4" fill="#fff" /></Svg>
              <span>جدید</span>
            </TipHead>
            <TipKey>F7</TipKey>
          </Tip>
          <Overlay $x={0} $y={0} width="1020" height="598">
            <path
              d="M578 183C580 170 590 160 603 155 620 148 640 145 653 148 664 152 668 162 671 172 675 185 684 197 681 210 678 222 668 225 655 227 640 230 620 228 603 224 592 222 583 216 581 207 578 198 577 190 578 183Z"
              fill="none"
              stroke="#ad3131"
              strokeWidth="12"
            />
          </Overlay>
        </Body>

        <BottomBar>
          <BottomText $w={36} $size={15}>۲۳:۴۴</BottomText>
          <BarSep $l={4} $r={3} />
          <BottomText $w={118} $size={12.5} $ws={2} $align="left">دوشنبه،۱۳ آبان، ۱۳۹۸</BottomText>
          <BarSep />
          <BottomText $w={60}>شرکت ۷</BottomText>
          <BarSep />
          <BottomText $w={117}>پشتیباني: <Phone>۰۲۱-۲۳۰۶۷</Phone></BottomText>
          <BottomText $w={111}>فروش: <Phone>۰۲۱-۲۲۲۲۱۱۴۲</Phone></BottomText>
          <Headset />
          <TrayIcons>
            {tray.map(([w, Icon], i) => (
              <React.Fragment key={i}>
                <BarSep />
                <TrayCell $w={w}><Icon /></TrayCell>
              </React.Fragment>
            ))}
          </TrayIcons>
        </BottomBar>
      </Page>
    </>
  )
}
